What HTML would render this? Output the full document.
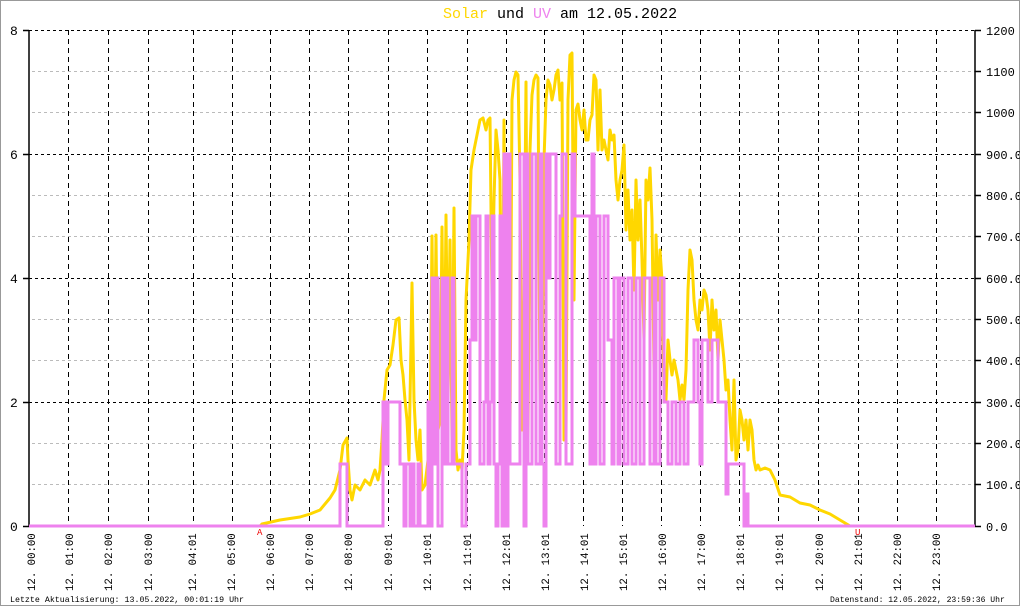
<!DOCTYPE html>
<html><head><meta charset="utf-8"><style>
html,body{margin:0;padding:0;background:#fff;}
svg{display:block;}
text{font-family:"Liberation Mono","DejaVu Sans Mono",monospace;}
</style></head><body>
<svg width="1020" height="606" viewBox="0 0 1020 606" xmlns="http://www.w3.org/2000/svg">
<rect x="0.5" y="0.5" width="1019" height="605" fill="#fff" stroke="#999"/>
<text x="443" y="18" font-size="15"><tspan fill="#ffd700">Solar</tspan> und <tspan fill="#ee82ee">UV</tspan> am 12.05.2022</text>
<g stroke="#bbb" stroke-dasharray="3,3" stroke-width="1">
<path d="M32 71.5H975M32 112.5H975M32 195.5H975M32 236.5H975M32 319.5H975M32 360.5H975M32 443.5H975M32 484.5H975"/>
</g>
<g stroke="#000" stroke-dasharray="3,3" stroke-width="1">
<path d="M29 30.5H975M29 154.5H975M29 278.5H975M29 402.5H975"/>
</g>
<g stroke="#000" stroke-dasharray="5,4" stroke-width="1">
<path d="M68.5 30V526M108.5 30V526M148.5 30V526M193.5 30V526M232.5 30V526M270.5 30V526M309.5 30V526M348.5 30V526M388.5 30V526M427.5 30V526M467.5 30V526M506.5 30V526M544.5 30V526M583.5 30V526M622.5 30V526M661.5 30V526M700.5 30V526M739.5 30V526M778.5 30V526M818.5 30V526M858.5 30V526M897.5 30V526M936.5 30V526"/>
</g>
<g stroke="#000" stroke-width="1.5">
<path d="M29 30V527M975 30V527M23 30.5H29M23 154.5H29M23 278.5H29M23 402.5H29M23 526.5H29M975 30.5H981M975 71.5H981M975 112.5H981M975 154.5H981M975 195.5H981M975 236.5H981M975 278.5H981M975 319.5H981M975 360.5H981M975 402.5H981M975 443.5H981M975 484.5H981M975 526.5H981"/>
</g>
<g font-size="13" fill="#000">
<text x="10" y="35">8</text><text x="10" y="159">6</text><text x="10" y="283">4</text><text x="10" y="407">2</text><text x="10" y="531">0</text>
</g>
<g font-size="12" fill="#000">
<text x="986" y="35">1200</text><text x="986" y="76">1100</text><text x="986" y="117">1000</text>
<text x="986" y="159">900.0</text><text x="986" y="200">800.0</text><text x="986" y="241">700.0</text><text x="986" y="283">600.0</text><text x="986" y="324">500.0</text><text x="986" y="365">400.0</text><text x="986" y="407">300.0</text><text x="986" y="448">200.0</text><text x="986" y="489">100.0</text><text x="986" y="531">0.0</text>
</g>
<polyline fill="none" stroke="#ffd700" stroke-width="3" stroke-linejoin="round" points="29,526 260,526 262,524 280,520 300,517 310,514 320,510 330,498 335,490 340,470 343,445 347,438 348,460 350,490 352,500 355,485 360,490 365,480 370,485 375,470 378,480 380,470 382,440 384,400 387,370 390,365 393,345 396,320 399,318 401,360 403,375 405,400 407,420 409,460 412,283 414,400 416,440 418,460 420,430 422,490 425,485 428,460 430,440 432,236 434,420 436,235 438,430 440,420 442,227 444,420 446,215 448,400 450,240 452,440 454,208 456,450 458,470 460,460 462,470 464,430 466,300 469,240 471,170 474,150 477,135 480,120 483,118 486,130 488,120 490,118 492,300 494,200 496,130 498,150 500,180 502,430 504,120 506,400 508,200 510,430 512,100 514,80 516,72 518,75 520,180 522,430 524,300 526,82 528,440 530,150 532,95 534,80 536,75 538,78 540,400 542,420 544,160 546,100 548,80 550,85 552,100 554,90 556,75 558,70 560,100 562,83 564,440 566,438 568,100 570,55 572,53 574,300 576,110 578,104 580,120 582,130 584,110 586,140 588,140 590,120 592,115 594,75 596,80 598,150 600,90 602,150 604,140 606,150 608,160 610,130 612,140 614,135 616,180 618,200 620,180 622,170 624,145 626,230 628,190 630,240 632,210 634,290 636,180 638,240 640,200 642,260 644,340 646,180 648,200 650,168 652,220 654,370 656,235 658,300 660,250 662,280 664,390 666,400 668,340 670,360 672,375 674,360 676,370 678,380 680,400 682,385 684,400 686,370 688,290 690,250 692,260 694,300 696,320 698,330 700,300 702,310 704,290 706,295 708,310 710,350 712,300 714,330 716,310 718,360 720,320 722,340 724,360 726,390 728,380 730,420 732,450 734,380 736,460 738,450 740,410 742,420 744,440 746,420 748,450 750,420 752,430 754,460 756,470 758,465 760,470 765,468 770,470 775,480 780,495 790,497 800,503 810,505 820,510 830,514 840,520 850,526 975,526"/>
<path fill="none" stroke="#ee82ee" stroke-width="3" d="M29,526 H340 V464 H347 V526 H383 V402 H386 V464 H388 V402 H400 V464 H404 V526 H406 V464 H410 V526 H412 V464 H414 V526 H418 V464 H420 V526 H428 V402 H430 V526 H432 V278 H434 V464 H436 V278 H438 V526 H442 V278 H444 V464 H446 V278 H448 V464 H452 V278 H454 V464 H462 V526 H466 V464 H470 V340 H472 V216 H474 V340 H476 V216 H480 V464 H484 V402 H486 V216 H488 V464 H490 V402 H492 V216 H494 V464 H496 V526 H498 V464 H500 V216 H502 V526 H504 V154 H506 V526 H508 V154 H510 V464 H520 V154 H524 V526 H526 V154 H528 V464 H532 V154 H536 V464 H540 V154 H542 V464 H544 V526 H546 V154 H548 V278 H550 V154 H556 V464 H560 V216 H562 V154 H566 V464 H572 V154 H575 V216 H590 V464 H592 V154 H594 V464 H596 V216 H600 V464 H604 V216 H608 V340 H612 V464 H614 V278 H618 V464 H620 V278 H624 V464 H628 V278 H632 V464 H636 V278 H640 V464 H644 V278 H650 V464 H654 V278 H656 V464 H660 V278 H664 V402 H668 V464 H672 V402 H676 V464 H680 V402 H684 V464 H688 V402 H694 V340 H698 V402 H700 V464 H702 V340 H708 V402 H712 V340 H718 V402 H726 V494 H728 V464 H744 V526 H746 V494 H748 V526 H975"/>
<text x="257" y="535" font-size="9" fill="#e00">A</text>
<text x="855" y="535" font-size="9" fill="#e00">U</text>
<g font-size="10.7" fill="#000">
<text transform="translate(35,591) rotate(-90)">12. 00:00</text>
<text transform="translate(73,591) rotate(-90)">12. 01:00</text>
<text transform="translate(112,591) rotate(-90)">12. 02:00</text>
<text transform="translate(152,591) rotate(-90)">12. 03:00</text>
<text transform="translate(196,591) rotate(-90)">12. 04:01</text>
<text transform="translate(235,591) rotate(-90)">12. 05:00</text>
<text transform="translate(274,591) rotate(-90)">12. 06:00</text>
<text transform="translate(313,591) rotate(-90)">12. 07:00</text>
<text transform="translate(352,591) rotate(-90)">12. 08:00</text>
<text transform="translate(392,591) rotate(-90)">12. 09:01</text>
<text transform="translate(431,591) rotate(-90)">12. 10:01</text>
<text transform="translate(471,591) rotate(-90)">12. 11:01</text>
<text transform="translate(510,591) rotate(-90)">12. 12:01</text>
<text transform="translate(549,591) rotate(-90)">12. 13:01</text>
<text transform="translate(588,591) rotate(-90)">12. 14:01</text>
<text transform="translate(627,591) rotate(-90)">12. 15:01</text>
<text transform="translate(666,591) rotate(-90)">12. 16:00</text>
<text transform="translate(705,591) rotate(-90)">12. 17:00</text>
<text transform="translate(744,591) rotate(-90)">12. 18:01</text>
<text transform="translate(783,591) rotate(-90)">12. 19:01</text>
<text transform="translate(823,591) rotate(-90)">12. 20:00</text>
<text transform="translate(862,591) rotate(-90)">12. 21:01</text>
<text transform="translate(901,591) rotate(-90)">12. 22:00</text>
<text transform="translate(940,591) rotate(-90)">12. 23:00</text>
</g>
<text x="10" y="602" font-size="8.3" fill="#000">Letzte Aktualisierung: 13.05.2022, 00:01:19 Uhr</text>
<text x="830" y="602" font-size="8.1" fill="#000">Datenstand: 12.05.2022, 23:59:36 Uhr</text>
</svg>
</body></html>
